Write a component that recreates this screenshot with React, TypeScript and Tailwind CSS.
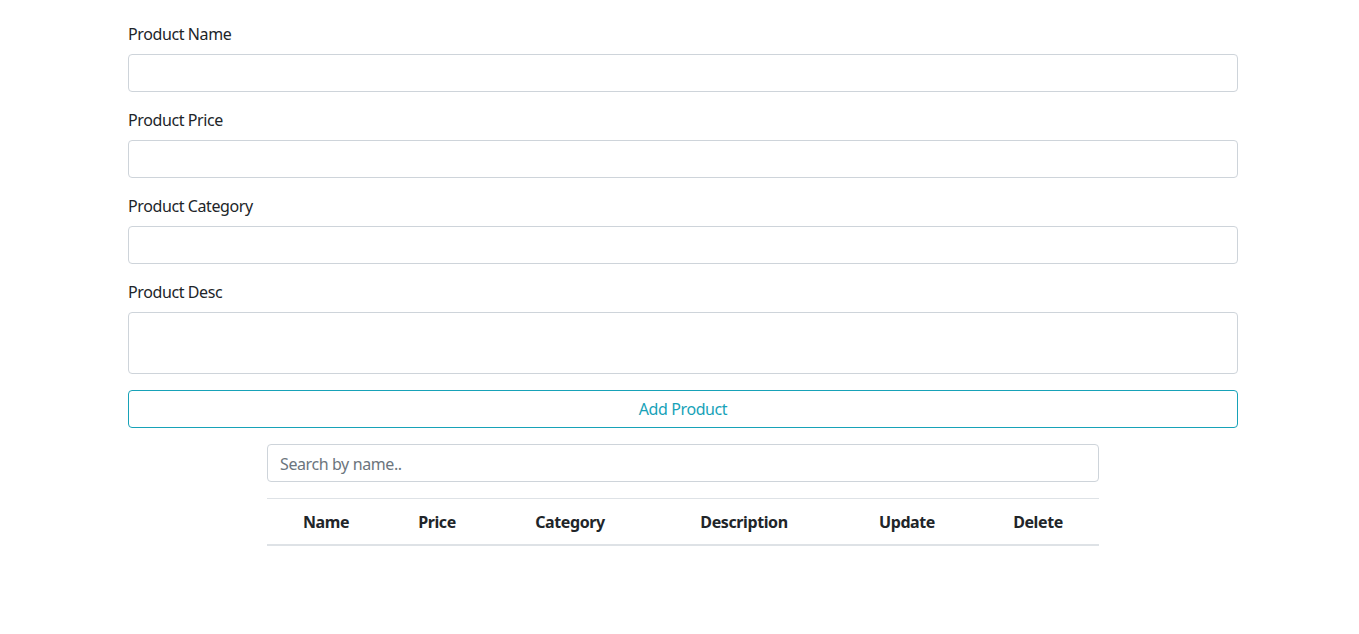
import React from "react";

const font = { fontFamily: '"Segoe UI", "Noto Sans", "Open Sans", sans-serif' };

function Field({ label, area }: { label: string; area?: boolean }) {
  return (
    <div className="mb-4">
      <label className="block mb-2 text-[16px] leading-6 text-[#212529] tracking-[-0.4px] h-6">{label}</label>
      {area ? (
        <textarea
          rows={2}
          className="block w-full h-[62px] border border-[#ced4da] rounded-[4px] px-3 py-[6px] resize-none outline-none"
        />
      ) : (
        <input className="block w-full h-[38px] border border-[#ced4da] rounded-[4px] px-3 outline-none" />
      )}
    </div>
  );
}

export default function App() {
  const cols: [string, string][] = [
    ["Name", "w-[118px]"],
    ["Price", "w-[104px]"],
    ["Category", "w-[162px]"],
    ["Description", "w-[186px]"],
    ["Update", "w-[140px]"],
    ["Delete", "w-[122px]"],
  ];
  return (
    <div className="min-h-[634px] bg-white text-[#212529]" style={font}>
      <div className="pl-[128px] pt-[22px] w-[1238px]">
        <Field label="Product Name" />
        <Field label="Product Price" />
        <Field label="Product Category" />
        <Field label="Product Desc" area />
        <button className="block w-full h-[38px] border border-[#17a2b8] rounded-[4px] text-[#17a2b8] text-[16px] leading-6 bg-white tracking-[-0.4px]">
          Add Product
        </button>
        <div className="w-[832px] mx-auto mt-4">
          <input
            placeholder="Search by name.."
            className="block w-full h-[38px] border border-[#ced4da] rounded-[4px] px-3 pt-px text-[16px] tracking-[-0.4px] outline-none placeholder:text-[#6c757d]"
          />
          <div className="mt-4 flex border-t border-[#dee2e6] border-b-2">
            {cols.map(([c, w]) => (
              <div key={c} className={`${w} pt-[11px] pb-[10px] text-center font-bold text-[16px] leading-6 tracking-[-0.4px]`}>
                {c}
              </div>
            ))}
          </div>
        </div>
      </div>
    </div>
  );
}
